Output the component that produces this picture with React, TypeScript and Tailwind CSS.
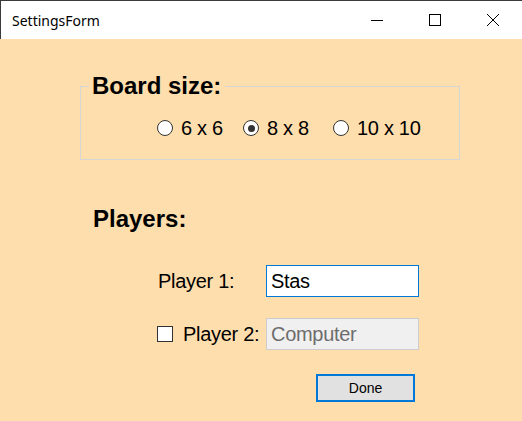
import React from "react";

function Radio({ checked, label, width }: { checked?: boolean; label: string; width: string }) {
  return (
    <div className={`flex items-center gap-2 ${width}`}>
      <span className="w-4 h-4 rounded-full border border-[#333] bg-white flex items-center justify-center">
        {checked && <span className="w-[7px] h-[7px] rounded-full bg-[#333]" />}
      </span>
      <span className="text-[20px] leading-none tracking-[-0.3px] text-black">{label}</span>
    </div>
  );
}

export default function App() {
  const sans = { fontFamily: '"Liberation Sans", Arial, sans-serif' };
  return (
    <div className="w-[522px] h-[421px] bg-[#ffdead] flex flex-col overflow-hidden" style={sans}>
      {/* title bar */}
      <div className="h-[39px] bg-white border-t border-l border-[#3a3a3a] flex items-center shrink-0">
        <span
          className="ml-[11px] text-[14px] text-black"
          style={{ fontFamily: '"Segoe UI", "Noto Sans", sans-serif' }}
        >
          SettingsForm
        </span>
        <div className="ml-auto flex h-full">
          <div className="w-[58px] flex items-center justify-center">
            <svg width="14" height="14" viewBox="0 0 14 14">
              <line x1="1" y1="7.5" x2="13" y2="7.5" stroke="#000" strokeWidth="1" />
            </svg>
          </div>
          <div className="w-[58px] flex items-center justify-center">
            <svg width="14" height="14" viewBox="0 0 14 14">
              <rect x="1.5" y="1.5" width="11" height="11" fill="none" stroke="#000" strokeWidth="1" />
            </svg>
          </div>
          <div className="w-[58px] flex items-center justify-center">
            <svg width="14" height="14" viewBox="0 0 14 14">
              <path d="M1 1 L13 13 M13 1 L1 13" stroke="#000" strokeWidth="1" />
            </svg>
          </div>
        </div>
      </div>

      {/* board size group */}
      <fieldset className="ml-[80px] mt-[35px] w-[380px] border border-[#d6d6d6] pb-[20px]">
        <legend className="ml-[8px] pl-[3px] pr-[4px] text-[24px] leading-none font-bold text-black">
          Board size:
        </legend>
        <div className="flex items-center h-[22px] mt-[19px] pl-[76px]">
          <Radio label="6 x 6" width="w-[86px]" />
          <Radio label="8 x 8" checked width="w-[90px]" />
          <Radio label="10 x 10" width="w-[100px]" />
        </div>
      </fieldset>

      <div className="ml-[93px] mt-[47px] text-[24px] leading-none font-bold text-black">Players:</div>

      <div className="ml-[157px] mt-[34px] flex items-center h-[32px]">
        <div className="w-[109px] pl-[1px] text-[20px] leading-none tracking-[-0.3px] text-black">Player 1:</div>
        <div className="w-[153px] h-[32px] bg-white border border-[#0078d7] flex items-center pl-[4px] text-[20px] tracking-[-0.3px] text-black">
          Stas
        </div>
      </div>

      <div className="ml-[157px] mt-[21px] flex items-center h-[32px]">
        <div className="w-[109px] flex items-center gap-[10px]">
          <span className="w-4 h-4 border border-[#333] bg-white" />
          <span className="text-[20px] leading-none tracking-[-0.3px] text-black">Player 2:</span>
        </div>
        <div className="w-[153px] h-[32px] bg-[#f0f0f0] border border-[#cccccc] flex items-center pl-[4px] text-[20px] tracking-[-0.3px] text-[#6d6d6d]">
          Computer
        </div>
      </div>

      <div className="ml-[316px] mt-[24px] w-[99px] h-[28px] bg-[#e1e1e1] border-2 border-[#0078d7] flex items-center justify-center text-[14px] text-black">
        Done
      </div>
    </div>
  );
}
